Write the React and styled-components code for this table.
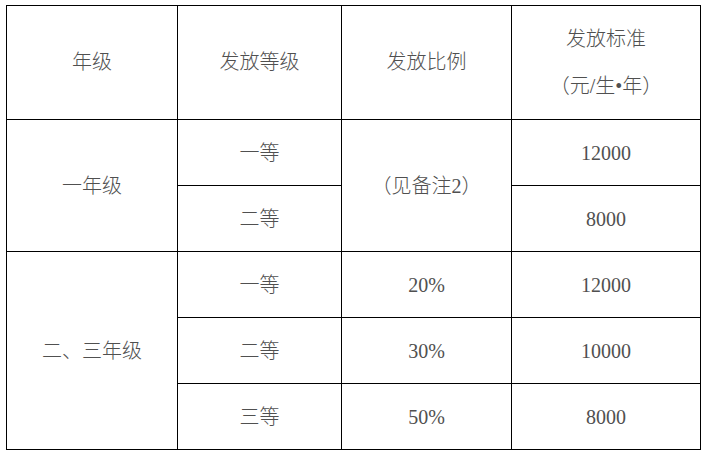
import React from 'react';
import styled, { createGlobalStyle } from 'styled-components';

const GlobalStyle = createGlobalStyle`
  html, body {
    margin: 0;
    padding: 0;
    background: #fff;
  }
  body {
    font-family: "Liberation Serif", "Noto Sans CJK SC", serif;
  }
`;

const Table = styled.table`
  border-collapse: collapse;
  margin: 5px 0 0 6px;
  table-layout: fixed;
  width: 694px;
  color: #505050;
  font-size: 20px;
  font-weight: 300;
`;

const Col = styled.col`
  width: ${({ w }) => w}px;
`;

const HeadCell = styled.th`
  border: 1px solid #000;
  height: 113px;
  padding: 0;
  font-weight: 300;
  text-align: center;
  vertical-align: middle;
  line-height: 47px;
`;

const Cell = styled.td`
  border: 1px solid #000;
  height: 65px;
  padding: 0;
  text-align: center;
  vertical-align: middle;
  line-height: 24px;
`;

const rows = [
  { grade: '一年级', span: 2, level: '一等', ratio: '（见备注2）', ratioSpan: 2, amount: '12000' },
  { level: '二等', amount: '8000' },
  { grade: '二、三年级', span: 3, level: '一等', ratio: '20%', amount: '12000' },
  { level: '二等', ratio: '30%', amount: '10000' },
  { level: '三等', ratio: '50%', amount: '8000' },
];

export default function App() {
  return (
    <>
      <GlobalStyle />
      <Table>
        <colgroup>
          <Col w={171} />
          <Col w={164} />
          <Col w={170} />
          <Col w={189} />
        </colgroup>
        <thead>
          <tr>
            <HeadCell>年级</HeadCell>
            <HeadCell>发放等级</HeadCell>
            <HeadCell>发放比例</HeadCell>
            <HeadCell>
              发放标准
              <br />
              （元/生•年）
            </HeadCell>
          </tr>
        </thead>
        <tbody>
          {rows.map((r, i) => (
            <tr key={i}>
              {r.grade && <Cell rowSpan={r.span}>{r.grade}</Cell>}
              <Cell>{r.level}</Cell>
              {r.ratio && <Cell rowSpan={r.ratioSpan || 1}>{r.ratio}</Cell>}
              <Cell>{r.amount}</Cell>
            </tr>
          ))}
        </tbody>
      </Table>
    </>
  );
}
